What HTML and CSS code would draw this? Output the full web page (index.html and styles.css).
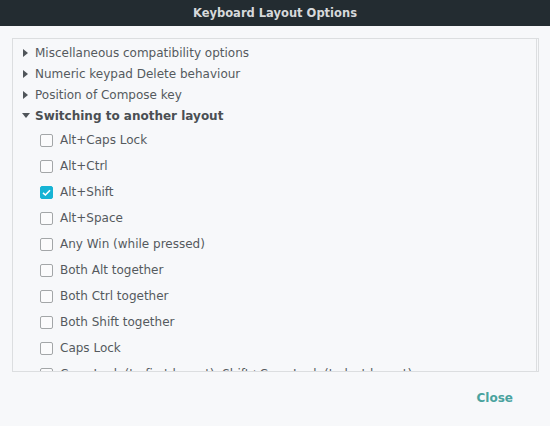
FILE: index.html
```html
<!DOCTYPE html>
<html>
<head>
<meta charset="utf-8">
<link rel="stylesheet" href="styles.css">
</head>
<body>
<div class="titlebar">Keyboard Layout Options</div>
<div class="content">
  <div class="frame">
    <div class="tree-row"><span class="arrow right"></span><span>Miscellaneous compatibility options</span></div>
    <div class="tree-row"><span class="arrow right"></span><span>Numeric keypad Delete behaviour</span></div>
    <div class="tree-row"><span class="arrow right"></span><span>Position of Compose key</span></div>
    <div class="tree-row bold"><span class="arrow down"></span><span>Switching to another layout</span></div>
    <div class="opts">
      <div class="opt"><span class="cb"></span><span>Alt+Caps Lock</span></div>
      <div class="opt"><span class="cb"></span><span>Alt+Ctrl</span></div>
      <div class="opt"><span class="cb checked"><svg width="13" height="13" viewBox="0 0 13 13"><path d="M3 6.8 L5.4 9 L10 4.2" fill="none" stroke="#fff" stroke-width="1.6"/></svg></span><span>Alt+Shift</span></div>
      <div class="opt"><span class="cb"></span><span>Alt+Space</span></div>
      <div class="opt"><span class="cb"></span><span>Any Win (while pressed)</span></div>
      <div class="opt"><span class="cb"></span><span>Both Alt together</span></div>
      <div class="opt"><span class="cb"></span><span>Both Ctrl together</span></div>
      <div class="opt"><span class="cb"></span><span>Both Shift together</span></div>
      <div class="opt"><span class="cb"></span><span>Caps Lock</span></div>
      <div class="opt"><span class="cb"></span><span>Caps Lock (to first layout), Shift+Caps Lock (to last layout)</span></div>
    </div>
  </div>
</div>
<div class="footer"><span class="close">Close</span></div>
</body>
</html>
```
FILE: styles.css
```css
html, body {
  margin: 0;
  padding: 0;
  background: #f7f8fa;
  font-family: "DejaVu Sans", sans-serif;
  font-size: 12px;
  color: #555a5e;
}
.titlebar {
  height: 26px;
  background: #232c31;
  color: #d6d9db;
  font-weight: bold;
  font-size: 11.5px;
  display: flex;
  align-items: center;
  justify-content: center;
}
.content {
  padding: 12px 11px 0 12px;
}
.frame {
  height: 329px;
  border: 1px solid #dcdee0;
  border-right: 3px double #dcdee0;
  overflow: hidden;
  padding-top: 3px;
  box-sizing: content-box;
}
.tree-row {
  height: 21px;
  display: flex;
  align-items: center;
  padding-left: 9px;
}
.tree-row.bold {
  font-weight: bold;
  color: #4a4f53;
}
.arrow {
  width: 0;
  height: 0;
}
.arrow.right {
  border-top: 4px solid transparent;
  border-bottom: 4px solid transparent;
  border-left: 5px solid #50555a;
  margin-left: 1px;
  margin-right: 7px;
}
.arrow.down {
  border-left: 4px solid transparent;
  border-right: 4px solid transparent;
  border-top: 5px solid #50555a;
  margin-right: 5px;
}
.opts {
  padding-top: 1px;
}
.opt {
  height: 26px;
  display: flex;
  align-items: center;
  padding-left: 27px;
}
.cb {
  width: 11px;
  height: 11px;
  border: 1px solid #a3a6a8;
  border-radius: 2px;
  margin-right: 7px;
  background: #fbfbfc;
  display: flex;
  flex-shrink: 0;
}
.cb.checked {
  background: #16b3d4;
  border-color: #16b3d4;
}
.cb svg {
  margin: -1px;
}
.opt span:last-child {
  white-space: nowrap;
}
.footer {
  display: flex;
  justify-content: flex-end;
  padding: 19px 37px 0 0;
}
.close {
  font-weight: bold;
  color: #4aa39e;
  font-size: 12px;
}
```
